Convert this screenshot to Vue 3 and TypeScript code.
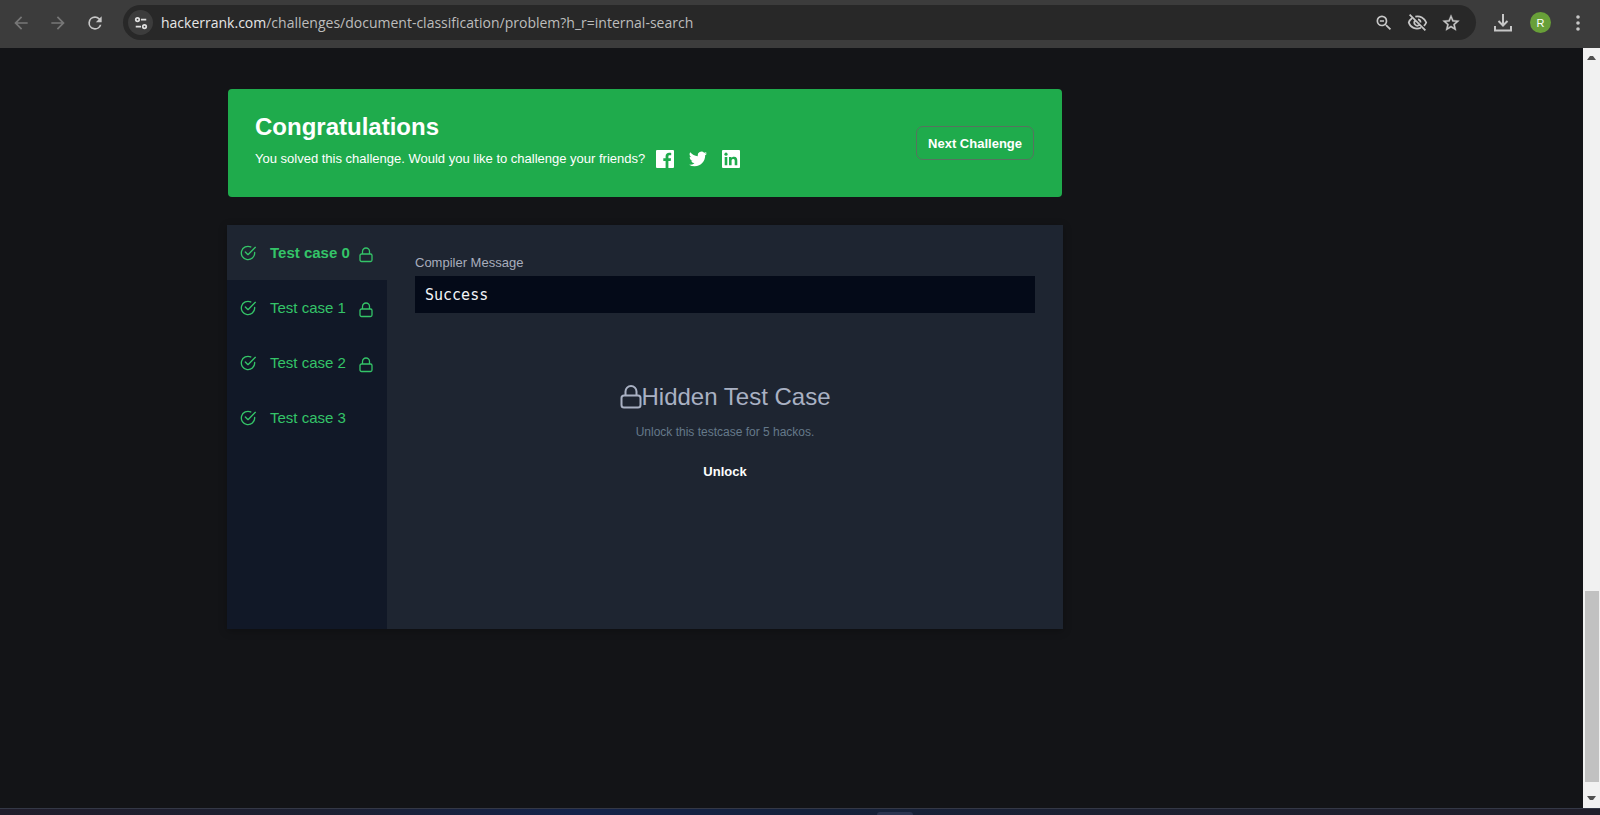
<script setup lang="ts">
import { ref } from 'vue'

interface TestCase {
  id: number
  locked: boolean
}

const url = ref('hackerrank.com/challenges/document-classification/problem?h_r=internal-search')
const domainEnd = url.value.indexOf('/')
const testCases: TestCase[] = [
  { id: 0, locked: true },
  { id: 1, locked: true },
  { id: 2, locked: true },
  { id: 3, locked: false },
]
const active = ref(0)
</script>

<template>
  <div class="window">
    <header class="toolbar">
      <nav class="history" aria-label="History">
        <button class="tool dim" aria-label="Back">
          <svg width="20" height="20" viewBox="0 0 24 24" fill="currentColor"><path d="M20 11H7.83l5.59-5.59L12 4l-8 8 8 8 1.41-1.41L7.83 13H20v-2z" /></svg>
        </button>
        <button class="tool dim" aria-label="Forward">
          <svg width="20" height="20" viewBox="0 0 24 24" fill="currentColor"><path d="M12 4l-1.41 1.41L16.17 11H4v2h12.17l-5.58 5.59L12 20l8-8z" /></svg>
        </button>
        <button class="tool" aria-label="Reload">
          <svg width="20" height="20" viewBox="0 0 24 24" fill="currentColor"><path d="M17.65 6.35A7.96 7.96 0 0 0 12 4a8 8 0 1 0 7.73 10h-2.08A6 6 0 1 1 12 6c1.66 0 3.14.69 4.22 1.78L13 11h7V4l-2.35 2.35z" /></svg>
        </button>
      </nav>
      <div class="address">
        <button class="site" aria-label="Site information">
          <svg width="14" height="14" viewBox="0 0 16 16" fill="none" stroke="currentColor" stroke-width="2"><circle cx="4" cy="4" r="2" /><path d="M8 4h6M2 12h6" /><circle cx="12" cy="12" r="2" /></svg>
        </button>
        <a class="url" href="#"><span class="domain">{{ url.slice(0, domainEnd) }}</span>{{ url.slice(domainEnd) }}</a>
        <div class="address-tools">
          <button class="tool" aria-label="Zoom out">
            <svg width="20" height="20" viewBox="0 0 24 24" fill="currentColor"><path d="M15.500 14h-.79l-.28-.27A6.470 6.470 0 0 0 16 9.500 6.500 6.500 0 1 0 9.500 16c1.610 0 3.090-.59 4.230-1.570l.27.28v.79l5 4.990L20.490 19l-4.990-5zm-6 0C7.010 14 5 11.990 5 9.500S7.010 5 9.500 5 14 7.010 14 9.500 11.990 14 9.500 14zM7 8.600h5v1.800H7z" /></svg>
          </button>
          <button class="tool" aria-label="Third-party cookies blocked">
            <svg width="21" height="21" viewBox="0 0 24 24" fill="none" stroke="currentColor" stroke-width="2"><path d="M9.500 5.200C15 4 20 7 22 12c-.6 1.500-1.500 2.800-2.700 3.900M16 18c-6 2.300-12 .1-14-6 .7-2 2-3.600 3.700-4.800M3 3l18 18M12.500 8.500a3.600 3.600 0 0 1 3 3.500M14 15a3.600 3.600 0 0 1-5-5" /></svg>
          </button>
          <button class="tool" aria-label="Bookmark">
            <svg width="20" height="20" viewBox="0 0 24 24" fill="currentColor" stroke="currentColor" stroke-width=".4"><path d="M22 9.240l-7.190-.62L12 2 9.190 8.630 2 9.240l5.460 4.730L5.820 21 12 17.270 18.180 21l-1.630-7.030L22 9.240zM12 15.400l-3.760 2.270 1-4.280-3.320-2.880 4.380-.38L12 6.100l1.710 4.040 4.380.38-3.320 2.880 1 4.280L12 15.400z" /></svg>
          </button>
        </div>
      </div>
      <div class="profile-tools">
        <button class="tool" aria-label="Downloads">
          <svg width="18" height="18" viewBox="0 0 18 18" fill="none" stroke="currentColor" stroke-width="2"><path d="M9 0v11M4.500 7L9 11.500 13.500 7M1 12v4.500h16V12" /></svg>
        </button>
        <button class="avatar" aria-label="Profile">R</button>
        <button class="tool menu" aria-label="Menu">
          <svg width="6" height="18" viewBox="0 0 6 18" fill="currentColor"><circle cx="3" cy="3" r="1.800" /><circle cx="3" cy="9" r="1.800" /><circle cx="3" cy="15" r="1.800" /></svg>
        </button>
      </div>
    </header>

    <div class="viewport">
      <main class="page">
        <section class="banner">
          <div>
            <h1>Congratulations</h1>
            <div class="share">
              <p>You solved this challenge. Would you like to challenge your friends?</p>
              <a href="#" aria-label="Facebook">
                <svg width="18" height="18" viewBox="0 0 18 18" fill="#fff"><path d="M1 0h16a1 1 0 0 1 1 1v16a1 1 0 0 1-1 1h-4.600v-7h2.300l.4-2.700h-2.700V6.600c0-.8.3-1.300 1.400-1.300h1.400V2.900c-.3 0-1.100-.1-2.100-.1-2.100 0-3.500 1.200-3.500 3.500v2H7.300V11h2.300v7H1a1 1 0 0 1-1-1V1a1 1 0 0 1 1-1z" /></svg>
              </a>
              <a href="#" aria-label="Twitter">
                <svg width="18" height="18" viewBox="0 0 24 24" fill="#fff"><path d="M23.950 4.570a10 10 0 0 1-2.820.77 4.960 4.960 0 0 0 2.160-2.720 9.900 9.900 0 0 1-3.120 1.190 4.920 4.920 0 0 0-8.390 4.480A13.930 13.930 0 0 1 1.640 3.160a4.920 4.920 0 0 0 1.520 6.570 4.900 4.900 0 0 1-2.230-.61v.06a4.920 4.920 0 0 0 3.950 4.830 5 5 0 0 1-2.210.08 4.940 4.940 0 0 0 4.600 3.420A9.870 9.870 0 0 1 0 19.540a13.990 13.990 0 0 0 7.550 2.210c9.050 0 14-7.500 14-13.980 0-.21 0-.42-.02-.63a9.940 9.940 0 0 0 2.460-2.550z" /></svg>
              </a>
              <a href="#" aria-label="LinkedIn">
                <svg width="18" height="18" viewBox="0 0 18 18"><rect width="18" height="18" rx="1" fill="#fff" /><g fill="#1fab4c"><circle cx="4" cy="4.200" r="1.600" /><path d="M2.700 7h2.600v8.300H2.700zM7 7h2.500v1.100c.5-.8 1.400-1.300 2.500-1.300 2.700 0 3.300 1.700 3.300 4v4.500h-2.600v-4c0-1 0-2.200-1.500-2.200s-1.600 1-1.600 2.100v4.100H7z" /></g></svg>
              </a>
            </div>
          </div>
          <button class="next">Next Challenge</button>
        </section>

        <section class="results">
          <div class="cases" role="tablist">
            <button
              v-for="item in testCases"
              :key="item.id"
              class="case"
              :class="{ active: item.id === active }"
              role="tab"
              :aria-selected="item.id === active"
              @click="active = item.id"
            >
              <svg class="check" width="16" height="16" viewBox="0 0 24 24" fill="none" stroke="currentColor" stroke-width="2" stroke-linecap="round" stroke-linejoin="round"><path d="M22 11.100V12a10 10 0 1 1-5.900-9.100" /><path d="M23 3.500L12 14.500l-4-4" /></svg>
              <span class="case-name">Test case {{ item.id }}</span>
              <svg v-if="item.locked" class="lock" width="14" height="16" viewBox="0 0 14 16" fill="none" stroke="currentColor" stroke-width="1.300"><rect x="1" y="7" width="12" height="7.500" rx="1.500" /><path d="M3.500 7V4.500a3.500 3.500 0 0 1 7 0V7" /></svg>
            </button>
          </div>
          <div class="detail" role="tabpanel">
            <h2>Compiler Message</h2>
            <pre>Success</pre>
            <div class="hidden-case">
              <h3>
                <svg width="22" height="24" viewBox="0 0 22 24" fill="none" stroke="currentColor" stroke-width="2"><rect x="1.500" y="10.500" width="19" height="12" rx="2.500" /><path d="M5.500 10.500V6.500a5.500 5.500 0 0 1 11 0v4" /></svg>
                <span>Hidden Test Case</span>
              </h3>
              <p>Unlock this testcase for 5 hackos.</p>
              <button class="unlock">Unlock</button>
            </div>
          </div>
        </section>
      </main>

      <div class="scrollbar" aria-hidden="true">
        <svg width="9" height="5" viewBox="0 0 9 5" fill="#505050"><path d="M0 5l3-4h3l3 4z" /></svg>
        <div class="track"><div class="thumb"></div></div>
        <svg width="9" height="5" viewBox="0 0 9 5" fill="#505050"><path d="M0 0l3 4h3l3-4z" /></svg>
      </div>
    </div>
    <footer class="taskbar"><div class="task"></div></footer>
  </div>
</template>

<style>
body {
  margin: 0;
  background: #131417;
}
</style>

<style scoped>
.window {
  display: flex;
  flex-direction: column;
  min-height: 100vh;
  font-family: "Liberation Sans", Arial, sans-serif;
}
button {
  padding: 0;
  border: 0;
  background: none;
  color: inherit;
  font-family: inherit;
  cursor: pointer;
}
svg {
  display: block;
  flex: none;
}
h1, h2, h3, p, pre {
  margin: 0;
}
.toolbar {
  display: flex;
  align-items: center;
  box-sizing: border-box;
  height: 48px;
  padding: 0 19px 3px 11px;
  background: #3c3c3c;
  color: #c7c7c7;
}
.history {
  display: flex;
  gap: 17px;
  margin-right: 18px;
}
.history .tool {
  width: 20px;
}
.history .dim {
  color: #777;
}
.address {
  display: flex;
  flex: 1;
  align-items: center;
  box-sizing: border-box;
  height: 35px;
  padding: 0 15px 0 5px;
  border-radius: 18px;
  background: #282828;
}
.site {
  display: grid;
  place-items: center;
  width: 25px;
  height: 25px;
  margin-right: 8px;
  border-radius: 50%;
  background: #3c3c3c;
  color: #dedede;
}
.url {
  flex: 1;
  color: #bdbdbd;
  font-family: "Open Sans", "Noto Sans", sans-serif;
  font-size: 14px;
  line-height: 20px;
  text-decoration: none;
  white-space: nowrap;
}
.domain {
  color: #e6e6e6;
}
.address-tools {
  display: flex;
  align-items: center;
  gap: 13px;
}
.profile-tools {
  display: flex;
  align-items: center;
  gap: 18px;
  margin-left: 18px;
}
.menu {
  margin-left: 6px;
}
.avatar {
  width: 21px;
  height: 21px;
  border-radius: 50%;
  background: #689f38;
  color: #fff;
  font-size: 11px;
}
.viewport {
  display: flex;
  flex: 1;
}
.page {
  display: grid;
  flex: 1;
  grid-template-columns: minmax(0, 836px);
  align-content: start;
  gap: 28px;
  padding: 41px 40px 40px 227px;
}
.banner {
  display: flex;
  align-items: center;
  justify-content: space-between;
  box-sizing: border-box;
  height: 108px;
  margin: 0 1px;
  padding: 0 28px 0 27px;
  border-radius: 4px;
  background: #1fab4c;
  color: #fff;
}
.banner h1 {
  font-size: 24px;
  font-weight: 700;
  line-height: 32px;
}
.share {
  display: flex;
  align-items: center;
  gap: 15px;
  height: 32px;
}
.share p {
  margin-right: -4px;
  font-size: 13px;
  line-height: 20px;
}
.next {
  height: 34px;
  padding: 0 11px;
  border: 1px solid #57735f;
  border-radius: 7px;
  font-size: 13px;
  font-weight: 700;
}
.results {
  display: flex;
  min-height: 404px;
  background: #1e2531;
  box-shadow: 0 2px 8px #0004;
}
.cases {
  flex: none;
  width: 160px;
  background: #111827;
}
.case {
  display: flex;
  align-items: center;
  width: 100%;
  height: 55px;
  padding: 0 14px 0 13px;
  color: #34c468;
  font-size: 15px;
  line-height: 20px;
}
.case.active {
  background: #1e2531;
  font-weight: 700;
}
.case-name {
  flex: 1;
  margin-left: 14px;
  text-align: left;
  white-space: nowrap;
}
.lock {
  margin-top: 4px;
}
.detail {
  flex: 1;
  padding: 28px;
}
.detail h2 {
  color: #a8adbd;
  font-size: 13px;
  font-weight: 400;
  line-height: 20px;
}
.detail pre {
  margin-top: 3px;
  padding: 9px 10px 7px;
  background: #040a18;
  color: #f2f4f8;
  font-family: "DejaVu Sans Mono", monospace;
  font-size: 15px;
  line-height: 21px;
}
.hidden-case {
  display: flex;
  flex-direction: column;
  align-items: center;
  padding-top: 68px;
}
.hidden-case h3 {
  display: flex;
  align-items: center;
  color: #a9b1c3;
  font-size: 24px;
  font-weight: 400;
  line-height: 32px;
}
.hidden-case p {
  margin-top: 9px;
  color: #65798a;
  font-size: 12px;
  line-height: 20px;
}
.unlock {
  margin-top: 20px;
  color: #fff;
  font-size: 13px;
  font-weight: 700;
  line-height: 20px;
}
.scrollbar {
  display: flex;
  flex: none;
  flex-direction: column;
  align-items: center;
  box-sizing: border-box;
  width: 17px;
  padding: 7px 0;
  background: #f1f1f1;
}
.track {
  display: flex;
  flex: 1;
  flex-direction: column;
  justify-content: flex-end;
  width: 14px;
  padding: 14px 0;
}
.thumb {
  height: 27%;
  background: #c1c1c1;
}
.taskbar {
  display: flex;
  justify-content: center;
  align-items: flex-end;
  box-sizing: border-box;
  height: 7px;
  border-top: 1px solid #343846;
  background: linear-gradient(90deg, #201d2b, #1c2031 20%, #14234a 36%, #14213b 50%, #1c2030 70%, #201e2a);
}
.task {
  width: 36px;
  height: 3px;
  margin-left: 190px;
  border-radius: 3px 3px 0 0;
  background: #2b3450;
}
</style>
